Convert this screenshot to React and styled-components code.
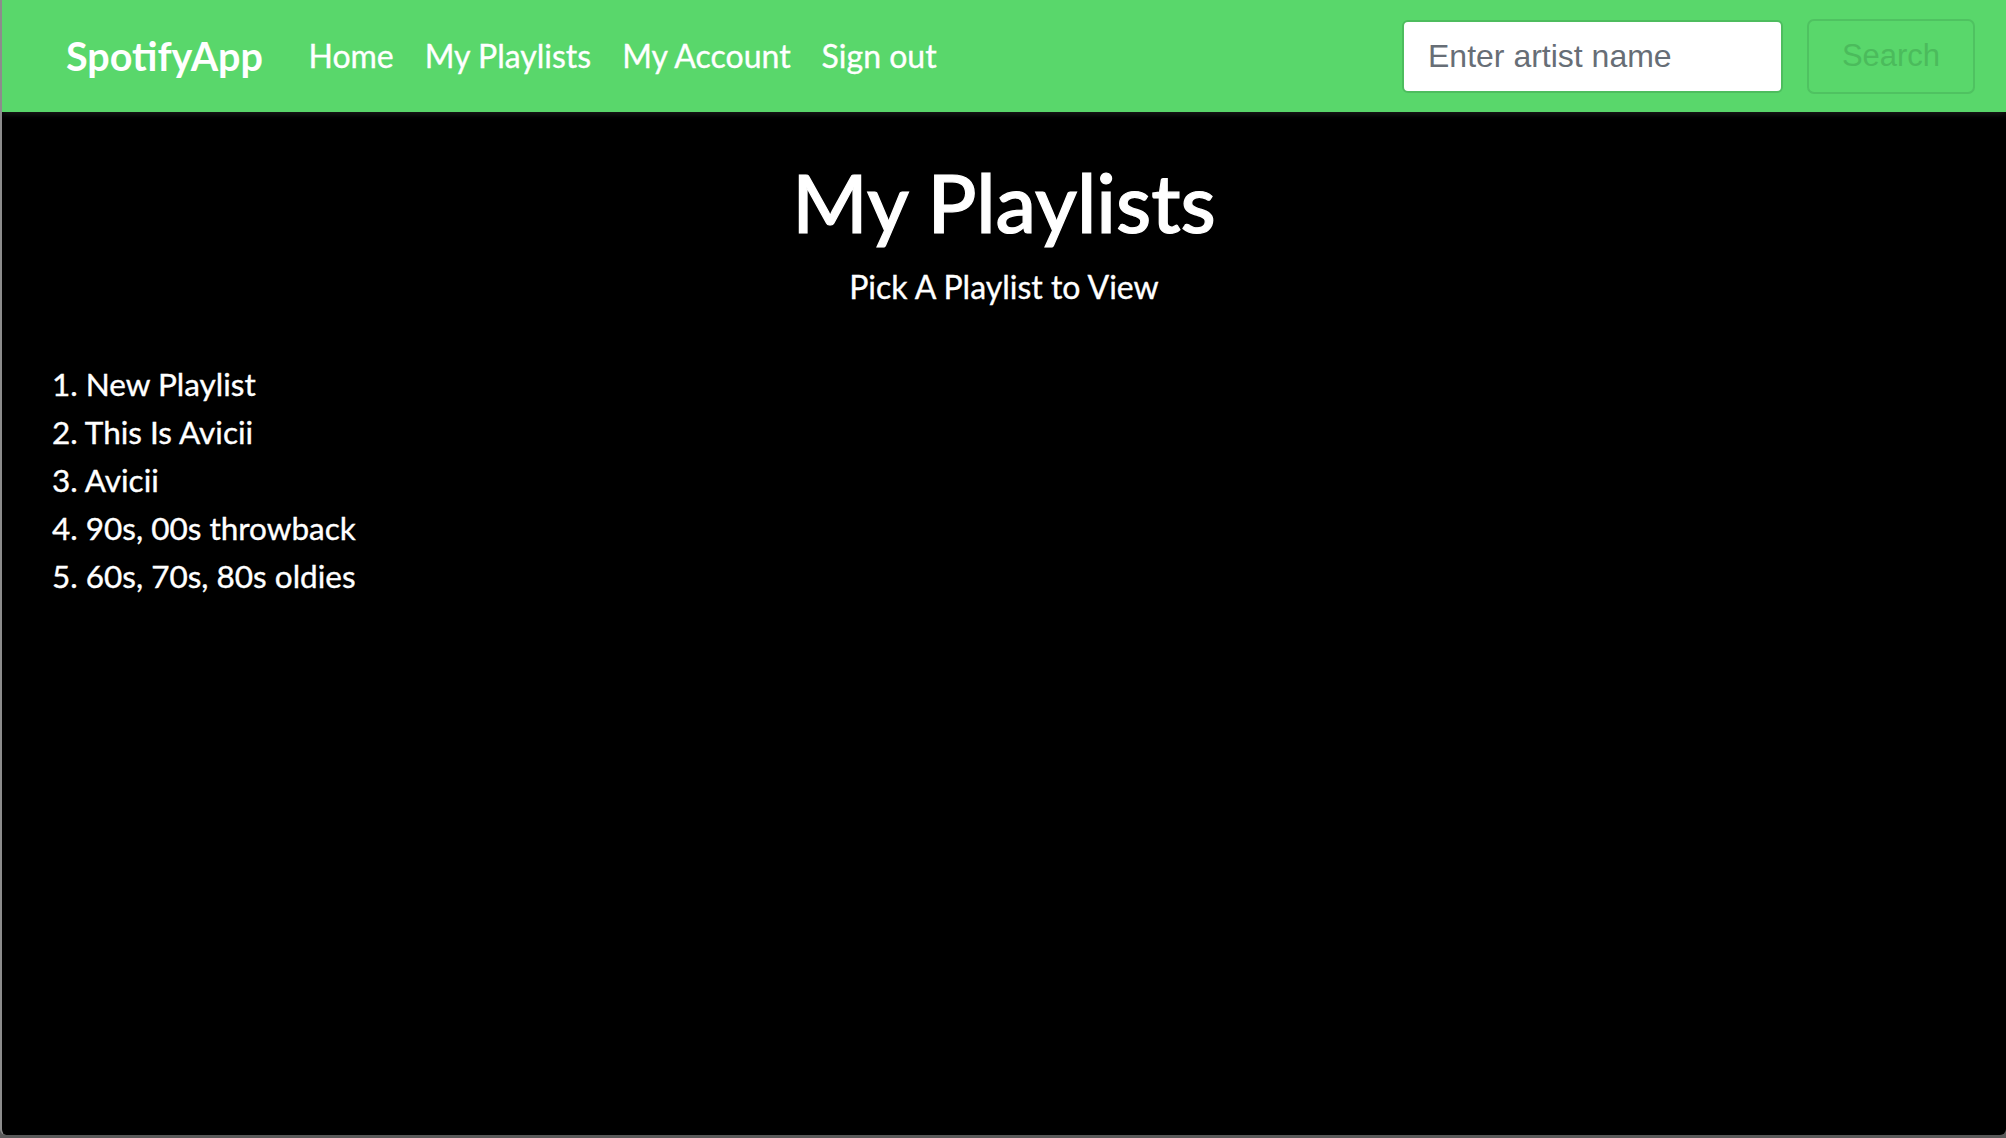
import React from 'react';
import styled, { createGlobalStyle } from 'styled-components';

const playlists = [
  'New Playlist',
  'This Is Avicii',
  'Avicii',
  '90s, 00s throwback',
  '60s, 70s, 80s oldies',
];

const navLinks = ['Home', 'My Playlists', 'My Account', 'Sign out'];

const App = () => {
  return (
    <>
      <GlobalStyle />
      <Frame>
        <Navbar>
          <Brand href="#">SpotifyApp</Brand>
          <NavList>
            {navLinks.map((link) => (
              <NavLink key={link} href="#">{link}</NavLink>
            ))}
          </NavList>
          <SearchForm onSubmit={(e) => e.preventDefault()}>
            <SearchInput type="text" placeholder="Enter artist name" />
            <SearchButton type="submit">Search</SearchButton>
          </SearchForm>
        </Navbar>

        <Main>
          <Title>My Playlists</Title>
          <Subtitle>Pick A Playlist to View</Subtitle>
          <PlaylistList>
            {playlists.map((name, index) => (
              <PlaylistItem key={index}>{index + 1}. {name}</PlaylistItem>
            ))}
          </PlaylistList>
        </Main>
      </Frame>
    </>
  );
};

export default App;

// -------------------- CSS -------------------- //

const GlobalStyle = createGlobalStyle`
  html, body {
    margin: 0;
    padding: 0;
    background: #5a5a5a;
  }

  body {
    font-family: Lato, "Open Sans", sans-serif;
  }

  * {
    box-sizing: border-box;
  }
`;

const Frame = styled.div`
  display: flex;
  flex-direction: column;
  height: 1135px;
  background: #000;
  border-left: 2px solid #8c8c8c;
  border-radius: 0 0 6px 6px;
  overflow: hidden;
`;

const Navbar = styled.nav`
  display: flex;
  align-items: center;
  height: 112px;
  padding: 0 31px 0 64px;
  background: #59d76b;
  box-shadow: 0 2px 6px rgba(40, 40, 40, 0.7);
  position: relative;
  z-index: 1;
`;

const Brand = styled.a`
  font-size: 39.5px;
  font-weight: 700;
  line-height: 1.2;
  color: #fff;
  text-decoration: none;
  margin-right: 30px;
`;

const NavList = styled.div`
  display: flex;
  align-items: center;
  flex: 1;
`;

const NavLink = styled.a`
  font-size: 32px;
  line-height: 1.2;
  color: #fff;
  text-decoration: none;
  padding: 0 15.5px;
  -webkit-text-stroke: 0.35px #fff;
`;

const SearchForm = styled.form`
  display: flex;
  align-items: center;
  gap: 24px;
`;

const SearchInput = styled.input`
  width: 381px;
  height: 73px;
  padding: 0 24px;
  font-family: "Liberation Sans", Arial, sans-serif;
  font-size: 32px;
  color: #495057;
  background: #fff;
  border: 2px solid #4dbd5e;
  border-radius: 6px;
  outline: none;

  &::placeholder {
    color: #676e76;
  }
`;

const SearchButton = styled.button`
  width: 168px;
  height: 75px;
  font-family: "Liberation Sans", Arial, sans-serif;
  font-size: 31px;
  color: #4bbb5c;
  background: transparent;
  border: 2px solid #4fc261;
  border-radius: 7px;
  cursor: pointer;
`;

const Main = styled.main`
  display: flex;
  flex-direction: column;
  color: #fff;
`;

const Title = styled.h1`
  margin: 41px 0 0;
  font-size: 81px;
  font-weight: 500;
  line-height: 1.2;
  text-align: center;
  -webkit-text-stroke: 1.2px #fff;
`;

const Subtitle = styled.p`
  margin: 18px 0 0;
  font-size: 32px;
  line-height: 1.2;
  text-align: center;
  -webkit-text-stroke: 0.35px #fff;
`;

const PlaylistList = styled.ol`
  list-style: none;
  margin: 53px 0 0;
  padding: 0 0 0 50px;
`;

const PlaylistItem = styled.li`
  font-size: 31.5px;
  line-height: 48px;
  -webkit-text-stroke: 0.35px #fff;
`;
